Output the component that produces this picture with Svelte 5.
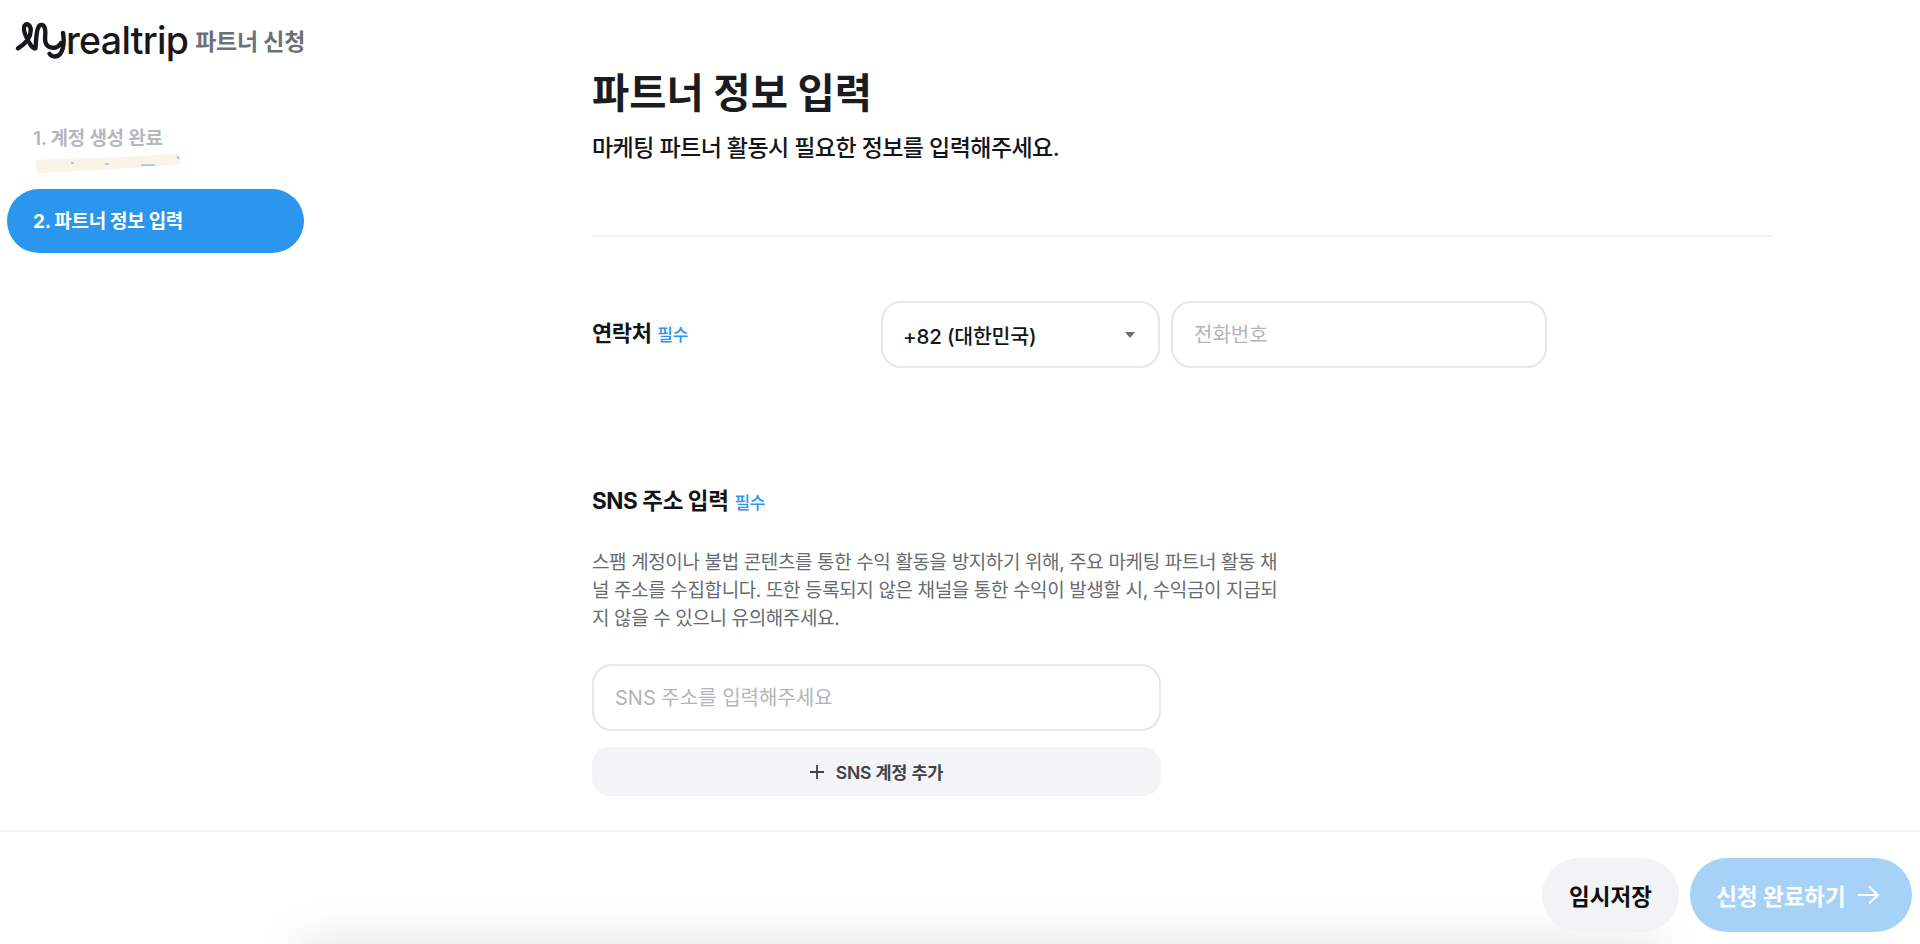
<script lang="ts">
	let phone = $state('');
	let sns = $state('');
</script>

<div class="page">
	<div class="columns">
		<aside class="sidebar">
			<div class="brand">
				<svg class="mark" viewBox="15 25 155 115" width="52" height="39" aria-hidden="true">
					<path d="M24 106C40 96 62 78 62 52C62 36 50 30 44 38C36 50 50 76 58 90C62 98 68 104 72 106M76 106C78 84 78 58 84 44C88 34 100 32 104 46C108 60 102 76 106 88C112 108 140 110 152 90M158 60C162 84 160 108 150 122C140 134 124 132 118 122" fill="none" stroke="#16181b" stroke-width="13" stroke-linecap="round" stroke-linejoin="round" />
				</svg>
				<span class="wordmark">realtrip</span>
				<span class="brand-sub">파트너 신청</span>
			</div>
			<nav class="steps">
				<div class="step done">
					<div>1. 계정 생성 완료</div>
					<svg class="scribble" viewBox="0 0 150 22" width="150" height="22" aria-hidden="true">
						<path d="M2 8C40 6 100 6 146 1L148 12C100 16 40 20 4 21Z" fill="#f8f5e6" />
						<path d="M38 11h3M72 12h4M108 13h14M144 4l2 3" stroke="#8cc4ee" stroke-width="1.5" fill="none" />
					</svg>
				</div>
				<div class="step active">2. 파트너 정보 입력</div>
			</nav>
		</aside>

		<main class="content">
			<h1>파트너 정보 입력</h1>
			<p class="lead">마케팅 파트너 활동시 필요한 정보를 입력해주세요.</p>
			<hr />

			<section class="contact-row">
				<div class="label">연락처 <span class="required">필수</span></div>
				<div class="fields">
					<button type="button" class="control select">
						<span>+82 (대한민국)</span>
						<span class="caret"></span>
					</button>
					<input class="control phone" placeholder="전화번호" bind:value={phone} />
				</div>
			</section>

			<section class="sns">
				<div class="label sns-label">SNS 주소 입력 <span class="required">필수</span></div>
				<p class="notice">
					스팸 계정이나 불법 콘텐츠를 통한 수익 활동을 방지하기 위해, 주요 마케팅 파트너 활동 채<br />
					널 주소를 수집합니다. 또한 등록되지 않은 채널을 통한 수익이 발생할 시, 수익금이 지급되<br />
					지 않을 수 있으니 유의해주세요.
				</p>
				<input class="control sns-input" placeholder="SNS 주소를 입력해주세요" bind:value={sns} />
				<button type="button" class="add">
					<svg viewBox="0 0 14 14" width="14" height="14" aria-hidden="true">
						<path d="M7 0v14M0 7h14" stroke="#3f4349" stroke-width="1.8" fill="none" />
					</svg>
					SNS 계정 추가
				</button>
			</section>
		</main>
	</div>

	<footer class="footer">
		<button type="button" class="btn save">임시저장</button>
		<button type="button" class="btn submit">
			신청 완료하기
			<svg viewBox="0 0 24 24" width="24" height="24" aria-hidden="true">
				<path d="M2 12h20M13 3.5l9 8.5-9 8.5" stroke="#fff" stroke-width="2.2" fill="none" />
			</svg>
		</button>
	</footer>
</div>

<style>
	:global(body) {
		background: #fff;
	}
	.page {
		position: relative;
		height: 944px;
		overflow: hidden;
		display: flex;
		flex-direction: column;
		font-family: Inter, 'Noto Sans CJK KR', sans-serif;
		color: #141517;
	}
	.page::after {
		content: '';
		position: absolute;
		left: 300px;
		right: 260px;
		bottom: -40px;
		height: 40px;
		box-shadow: 0 0 50px rgba(0, 0, 0, 0.13);
	}
	.columns {
		flex: 1;
		display: flex;
		min-height: 0;
	}
	.sidebar {
		width: 592px;
		flex-shrink: 0;
		padding: 20px 0 0 7px;
		box-sizing: border-box;
	}
	.brand {
		display: flex;
		align-items: center;
		height: 40px;
		margin-left: 8px;
	}
	.mark {
		flex-shrink: 0;
	}
	.wordmark {
		font-size: 37.5px;
		font-weight: 500;
		letter-spacing: -0.7px;
		color: #16181b;
		margin-left: -1px;
	}
	.brand-sub {
		font-size: 23px;
		font-weight: 600;
		color: #6c7177;
		margin-left: 7px;
		letter-spacing: -0.3px;
	}
	.steps {
		margin-top: 66px;
		width: 297px;
	}
	.step {
		font-size: 19px;
		font-weight: 600;
		padding-left: 26px;
		letter-spacing: -0.3px;
	}
	.done {
		color: #b4b8be;
		height: 63px;
		line-height: 26px;
	}
	.scribble {
		display: block;
		margin-top: 0;
		filter: blur(0.6px);
	}
	.active {
		height: 64px;
		line-height: 66px;
		border-radius: 32px;
		background: #2b96ed;
		color: #fff;
		font-weight: 700;
	}
	.content {
		width: 1180px;
		flex-shrink: 0;
		padding-top: 66px;
	}
	h1 {
		margin: 0;
		font-size: 40.5px;
		line-height: 56px;
		font-weight: 700;
		color: #1a1c1f;
	}
	.lead {
		margin: 10px 0 0;
		font-size: 23px;
		line-height: 32px;
		font-weight: 500;
		letter-spacing: -0.55px;
	}
	hr {
		margin: 71px 0 0;
		border: 0;
		height: 2px;
		background: #efefef;
	}
	.contact-row {
		display: flex;
		align-items: center;
		margin-top: 64px;
	}
	.label {
		font-size: 22px;
		font-weight: 700;
		letter-spacing: -0.4px;
	}
	.contact-row .label {
		width: 289px;
		padding-bottom: 7px;
	}
	.required {
		font-size: 17px;
		font-weight: 500;
		color: #2b96ed;
		margin-left: 1px;
		letter-spacing: -0.3px;
	}
	.fields {
		display: flex;
		gap: 11px;
	}
	.control {
		height: 67px;
		box-sizing: border-box;
		border: 2px solid #e5e7ea;
		border-radius: 20px;
		background: #fff;
		font-family: inherit;
		font-size: 20px;
		padding: 0 21px;
		color: #141517;
		outline: none;
	}
	.control::placeholder {
		color: #b1b5ba;
	}
	.select {
		width: 279px;
		display: flex;
		align-items: center;
		justify-content: space-between;
		font-size: 20.5px;
		font-weight: 500;
		letter-spacing: -0.2px;
		padding-left: 20px;
	}
	.caret {
		width: 0;
		height: 0;
		border-left: 5.5px solid transparent;
		border-right: 5.5px solid transparent;
		border-top: 6px solid #6b6f74;
		margin-right: 2px;
	}
	.phone {
		width: 376px;
	}
	.sns {
		margin-top: 118px;
	}
	.sns-label {
		font-size: 22.5px;
		line-height: 30px;
	}
	.notice {
		margin: 31px 0 0;
		font-size: 19px;
		line-height: 28px;
		color: #666b71;
		letter-spacing: -0.38px;
		white-space: nowrap;
	}
	.sns-input {
		display: block;
		width: 569px;
		margin-top: 31px;
	}
	.add {
		margin-top: 16px;
		width: 569px;
		height: 49px;
		display: flex;
		align-items: center;
		justify-content: center;
		gap: 12px;
		border: 0;
		border-radius: 18px;
		background: #f2f4f5;
		font-family: inherit;
		font-size: 17.5px;
		font-weight: 600;
		letter-spacing: -0.2px;
		color: #3f4349;
	}
	.footer {
		flex-shrink: 0;
		height: 114px;
		box-sizing: border-box;
		border-top: 2px solid #f6f6f6;
		display: flex;
		justify-content: flex-end;
		gap: 11px;
		padding: 26px 8px 0 0;
	}
	.btn {
		height: 74px;
		border: 0;
		border-radius: 37px;
		font-family: inherit;
		font-size: 22.5px;
		font-weight: 700;
		position: relative;
		z-index: 1;
	}
	.save {
		width: 137px;
		background: #f1f3f4;
		color: #0e0f11;
	}
	.submit {
		width: 222px;
		background: #a6d2f8;
		color: #fff;
		display: flex;
		align-items: center;
		justify-content: center;
		gap: 10px;
		padding: 0 6px 0 0;
	}
</style>
